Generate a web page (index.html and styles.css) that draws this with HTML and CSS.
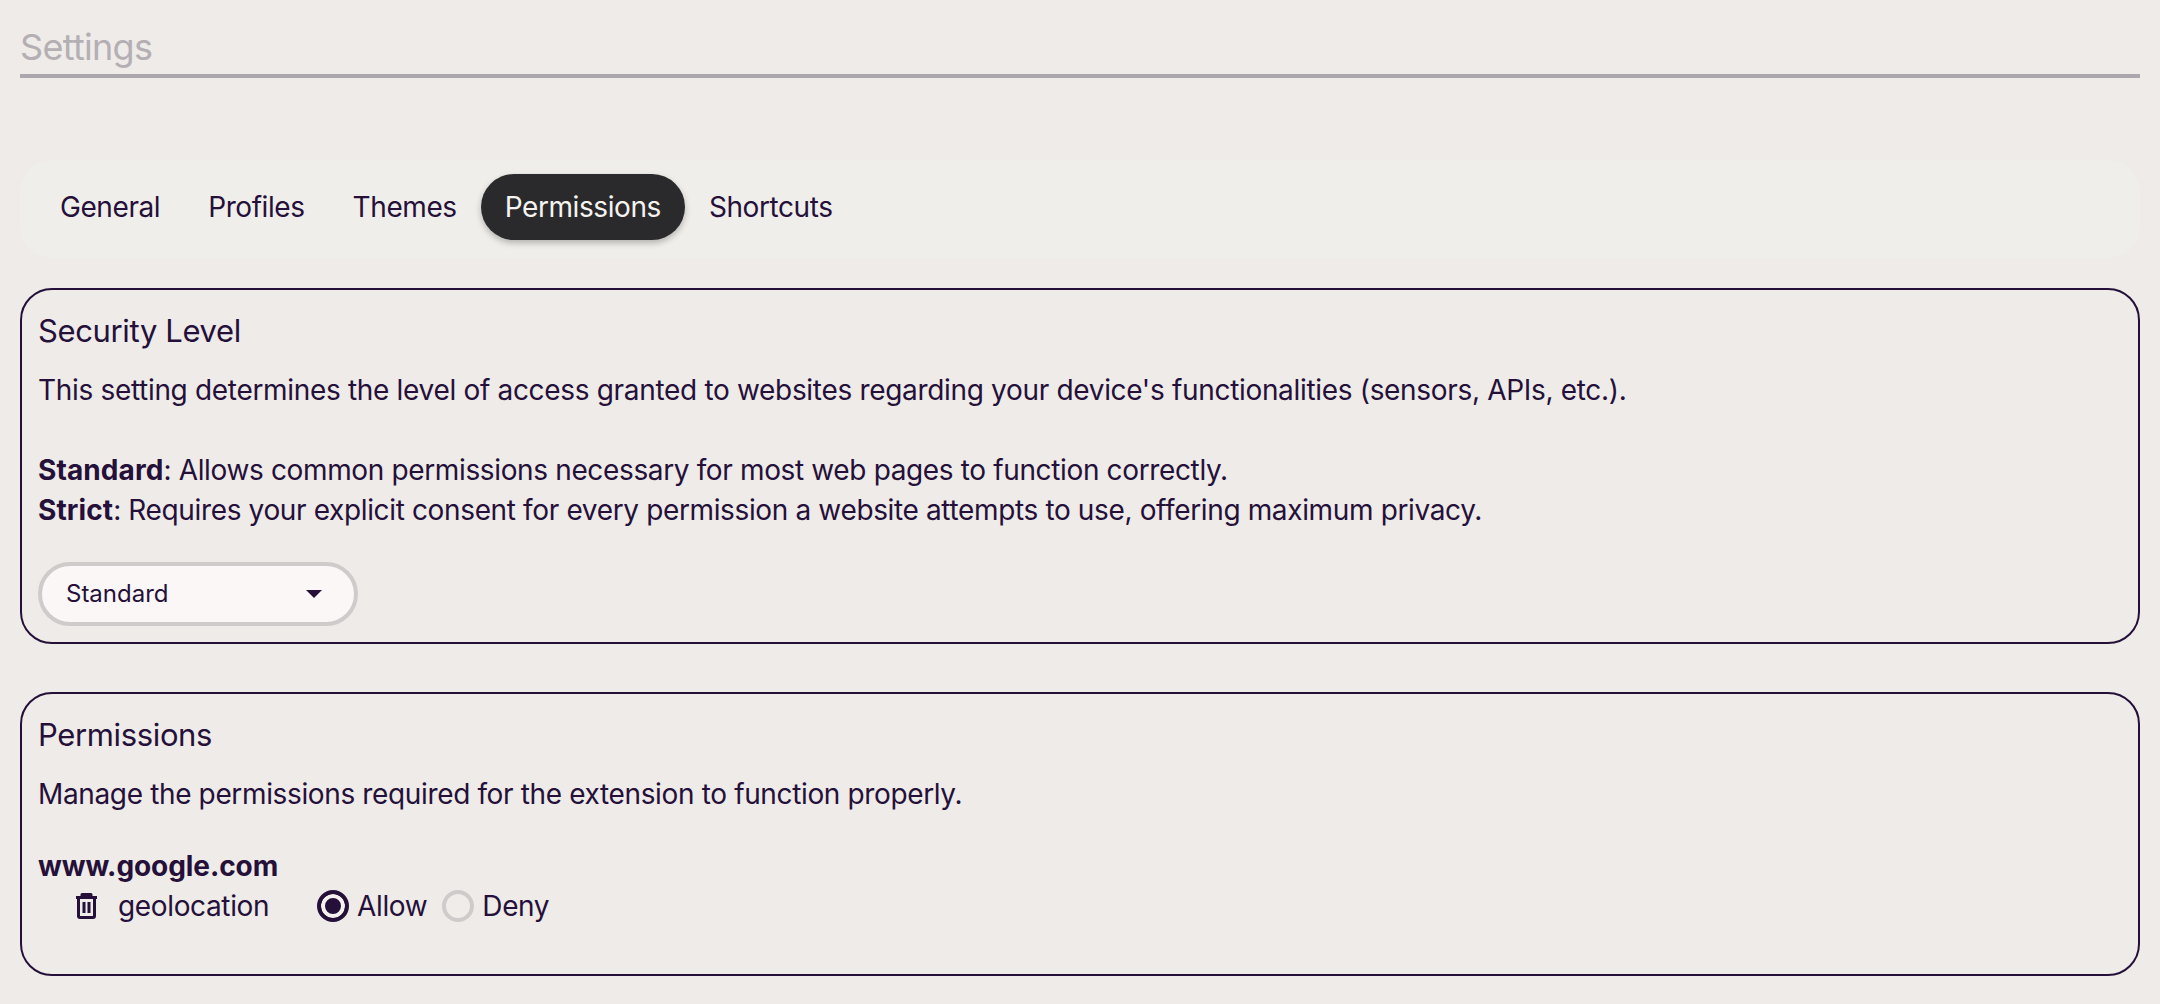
FILE: index.html
```html
<!DOCTYPE html>
<html lang="en">
<head>
<meta charset="utf-8">
<title>Settings</title>
<link rel="stylesheet" href="styles.css">
</head>
<body>
<main class="page">
  <h1 class="page-title">Settings</h1>
  <nav class="tabs">
    <a class="tab">General</a>
    <a class="tab">Profiles</a>
    <a class="tab">Themes</a>
    <a class="tab tab-active">Permissions</a>
    <a class="tab">Shortcuts</a>
  </nav>
  <section class="card card-security">
    <h2 class="card-title">Security Level</h2>
    <p class="card-text card-lead">This setting determines the level of access granted to websites regarding your device's functionalities (sensors, APIs, etc.).</p>
    <p class="card-text card-gap"><b>Standard</b>: Allows common permissions necessary for most web pages to function correctly.<br><b>Strict</b>: Requires your explicit consent for every permission a website attempts to use, offering maximum privacy.</p>
    <div class="select">
      <span>Standard</span>
      <svg class="caret" viewBox="0 0 16 8" width="16" height="8"><path d="M0 0h16L8 8z"/></svg>
    </div>
  </section>
  <section class="card card-perms">
    <h2 class="card-title">Permissions</h2>
    <p class="card-text">Manage the permissions required for the extension to function properly.</p>
    <div class="site">www.google.com</div>
    <div class="perm-row">
      <svg class="trash" viewBox="0 0 32 32" width="32" height="32" fill="none" stroke="currentColor" stroke-width="3" stroke-linejoin="round"><path d="M6 7.500h21M12 7V4.500h9V7M8.500 7.500V26a1.500 1.500 0 0 0 1.500 1.500h13a1.500 1.500 0 0 0 1.500-1.500V7.500M14 12v11M19 12v11"/></svg>
      <span class="perm-name">geolocation</span>
      <label class="radio radio-on"></label><span class="radio-label">Allow</span>
      <label class="radio"></label><span class="radio-label">Deny</span>
    </div>
  </section>
</main>
</body>
</html>
```
FILE: styles.css
```css
* { box-sizing: border-box; }
html, body { margin: 0; height: 100%; }
body { background: #eeebe8; color: #25103a; font-family: Inter, "Liberation Sans", sans-serif; font-size: 28px; line-height: 40px; letter-spacing: -0.36px; overflow: hidden; }
b { letter-spacing: 0.1px; }
.page { padding: 20px 20px 0; display: flex; flex-direction: column; }
.page-title { margin: 0; height: 58px; font-size: 36px; line-height: 54px; font-weight: 400; letter-spacing: -0.7px; color: #b4afb3; border-bottom: 4px solid #aba7ad; }
.tabs { margin-top: 82px; height: 98px; padding: 14px 16px; display: flex; background: #f0eeea; border-radius: 32px; }
.tab { height: 66px; padding: 0 24px; display: flex; align-items: center; border-radius: 33px; letter-spacing: -0.42px; }
.tab-active { background: #2a2a2c; color: #f5f3f0; box-shadow: 0 3px 6px rgba(0,0,0,.25); }
.card { border: 2px solid #25103a; border-radius: 32px; padding: 16px; }
.card-security { margin-top: 30px; height: 356px; }
.card-perms { margin-top: 48px; height: 284px; }
.card-title { margin: 0; font-size: 31px; line-height: 50px; font-weight: 400; }
.card-text { margin: 14px 0 0; }
.card-lead { letter-spacing: -0.32px; }
.card-gap { margin-top: 40px; }
.select { margin-top: 32px; width: 320px; height: 64px; border: 4px solid #cfcbcb; border-radius: 32px; background: #faf7f6; padding: 0 32px 0 24px; display: flex; align-items: center; justify-content: space-between; font-size: 24px; letter-spacing: 0; }
.caret { fill: #25103a; display: block; }
.site { margin-top: 32px; font-weight: 700; letter-spacing: -0.08px; }
.perm-row { display: flex; align-items: center; height: 40px; padding-left: 32px; }
.trash { display: block; }
.perm-name { margin-left: 16px; width: 199px; }
.radio { width: 32px; height: 32px; border-radius: 50%; border: 4px solid #cfcbcb; background: #f0ecea; margin-right: 8px; }
.radio-on { border: 4px solid #25103a; background: #25103a; box-shadow: inset 0 0 0 4px #f5f1ef; }
.radio-label { margin-right: 15px; }
```
